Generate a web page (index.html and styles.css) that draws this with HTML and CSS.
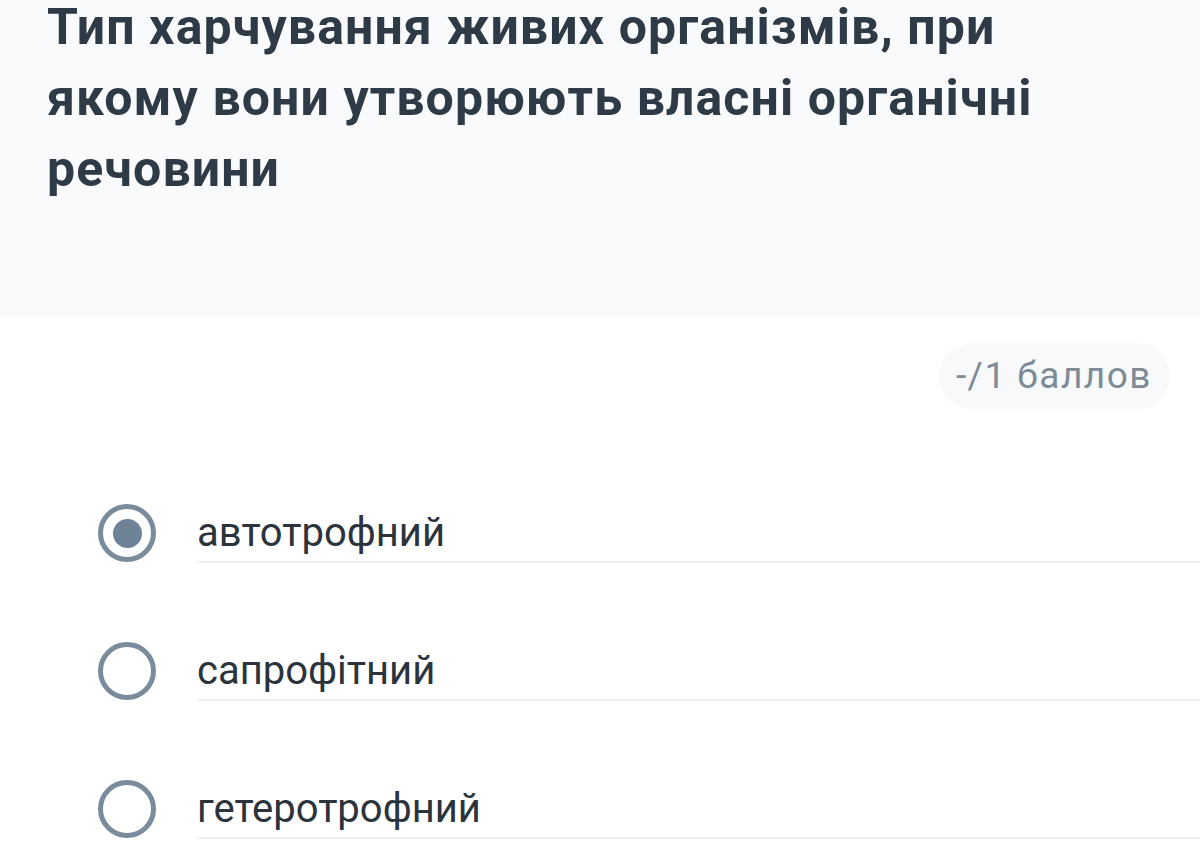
FILE: index.html
```html
<!DOCTYPE html>
<html lang="uk">
<head>
<meta charset="utf-8">
<link rel="stylesheet" href="styles.css">
</head>
<body>
<header class="question">
  <h1 class="question-title">Тип харчування живих організмів, при якому вони утворюють власні органічні речовини</h1>
</header>
<main class="answers">
  <div class="points-row"><span class="points">-/1 баллов</span></div>
  <ul class="options">
    <li class="option option-checked">
      <span class="radio"><span class="radio-dot"></span></span>
      <span class="option-label">автотрофний</span>
    </li>
    <li class="option">
      <span class="radio"></span>
      <span class="option-label">сапрофітний</span>
    </li>
    <li class="option">
      <span class="radio"></span>
      <span class="option-label">гетеротрофний</span>
    </li>
  </ul>
</main>
</body>
</html>
```

FILE: styles.css
```css
html, body {
  margin: 0;
  padding: 0;
  background: #ffffff;
  font-family: Roboto, "Noto Sans", sans-serif;
}
body {
  width: 1200px;
  height: 852px;
  overflow: hidden;
}
.question {
  display: flow-root;
  background: #f9fafc;
  height: 316px;
  box-sizing: border-box;
  padding: 8px 100px 0 47px;
}
.question-title {
  margin: 0;
  font-size: 50px;
  line-height: 71px;
  font-weight: 700;
  letter-spacing: 1.1px;
  color: #2e3a45;
  text-box: trim-start cap alphabetic;
}
.points-row {
  display: flex;
  justify-content: flex-end;
  padding: 27px 30px 0 0;
}
.points {
  background: #f8f9fb;
  color: #7d8b97;
  font-size: 37px;
  letter-spacing: 1.5px;
  line-height: 66px;
  padding: 0 18px 0 17px;
  border-radius: 33px;
}
.options {
  list-style: none;
  margin: 96px 0 0 0;
  padding: 0;
}
.option {
  display: flex;
  align-items: flex-start;
  height: 138px;
}
.option:last-child {
  height: auto;
}
.radio {
  flex: none;
  box-sizing: border-box;
  width: 58px;
  height: 58px;
  margin: -1px 41px 0 98px;
  border: 5px solid #7a8c9b;
  border-radius: 50%;
  display: flex;
  align-items: center;
  justify-content: center;
}
.radio-dot {
  width: 29px;
  height: 29px;
  border-radius: 50%;
  background: #6f8398;
}
.option-label {
  flex: 1;
  font-size: 40px;
  color: #2b343c;
  border-bottom: 2px solid #eef0f3;
  height: 56px;
  line-height: 56px;
}
```
